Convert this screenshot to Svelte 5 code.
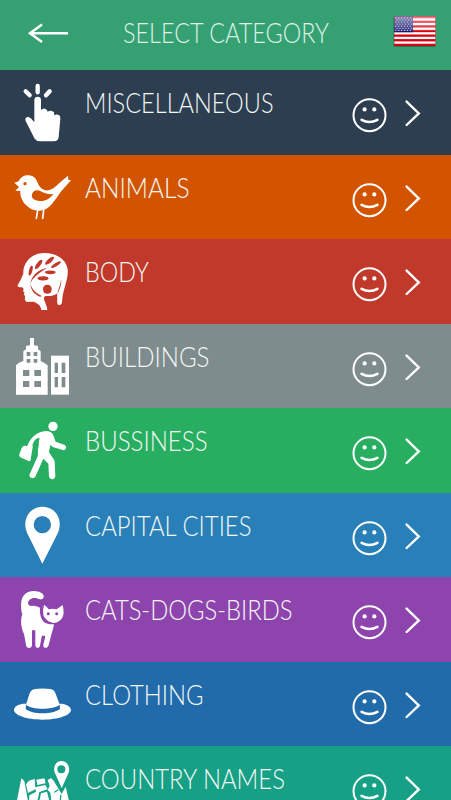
<script>
    /** @typedef {{name:string,icon:string,color:string,width:number}} Category */
    /** @type {Category[]} */
    const categories = [
        { name: 'MISCELLANEOUS', icon: 'hand', color: '#2c3e50', width: 188.5 },
        { name: 'ANIMALS', icon: 'bird', color: '#d35400', width: 104.5 },
        { name: 'BODY', icon: 'head', color: '#c0392b', width: 64 },
        { name: 'BUILDINGS', icon: 'buildings', color: '#7f8c8d', width: 124.5 },
        { name: 'BUSSINESS', icon: 'walker', color: '#27ae60', width: 122.5 },
        { name: 'CAPITAL CITIES', icon: 'pin', color: '#2980b9', width: 166.5 },
        { name: 'CATS-DOGS-BIRDS', icon: 'cat', color: '#8e44ad', width: 207.5 },
        { name: 'CLOTHING', icon: 'hat', color: '#226bab', width: 118.5 },
        { name: 'COUNTRY NAMES', icon: 'map', color: '#16a085', width: 200 }
    ];

    const stripes = [0, 1, 2, 3, 4, 5, 6];
    const starRows = [0, 1, 2, 3, 4, 5, 6];
    const starCols = [0, 1, 2, 3, 4, 5];
</script>

<div class="screen">
    <header>
        <button class="back" aria-label="Back">
            <svg width="42" height="24" viewBox="0 0 42 24">
                <path d="M15 3.5 L3 12.3 L15 21 M3 12.3 H41" />
            </svg>
        </button>
        <h1>
            <svg class="label" width="208" height="32">
                <text x="0" y="24" textLength="206" lengthAdjust="spacingAndGlyphs">SELECT CATEGORY</text>
            </svg>
        </h1>
        <svg class="flag" width="46" height="36" viewBox="0 0 46 36" role="img" aria-label="English (US)">
            <defs>
                <linearGradient id="gloss" x1="0" y1="0" x2="0" y2="1">
                    <stop offset="0" stop-color="#fff" stop-opacity="0.5" />
                    <stop offset="0.5" stop-color="#fff" stop-opacity="0.15" />
                    <stop offset="0.51" stop-color="#fff" stop-opacity="0" />
                </linearGradient>
            </defs>
            <rect x="1.5" y="3" width="42.5" height="29.8" rx="1" fill="#16633f" opacity="0.65" />
            <rect x="2" y="2" width="41.5" height="30" fill="#fff" />
            {#each stripes as n}
                <rect x="2" y={2 + n * 4.62} width="41.5" height="2.31" fill="#d8000f" />
            {/each}
            <rect x="2" y="2" width="19" height="16.2" fill="#17176f" />
            {#each starRows as r}
                {#each starCols as c}
                    <circle cx={3.8 + c * 2.9 + (r % 2) * 1.3} cy={3.8 + r * 2.1} r="0.62" fill="#c9cae5" />
                {/each}
            {/each}
            <rect x="2" y="2" width="41.5" height="30" fill="url(#gloss)" />
            <rect x="2.3" y="2.3" width="41" height="29.4" fill="none" stroke="#a31229" stroke-width="0.6" opacity="0.5" />
        </svg>
    </header>

    <main>
        {#each categories as category (category.name)}
            <div class="row" style="background-color: {category.color}">
                <svg class="icon" viewBox="0 0 255 255" style="color: {category.color}">
                    {#if category.icon === 'hand'}
                        <g class="ray">
                            <path d="M77 64 L89 76 M113 48 V67 M149 64 L138 76" />
                        </g>
                        <path d="M103 90 Q103 80 113 80 Q123 80 123 90 V120 Q132 111 141 120 L143 125 Q154 118 162 127 L163 136 Q170 131 178 136 Q181 139 181 146 L176 201 Q174 214 162 214 H120 Q110 214 104 206 L78 155 Q73 146 80 142 Q86 138 94 146 L103 157 Z" />
                    {:else if category.icon === 'bird'}
                        <path d="M43 83 L56 79 C63 64 75 60 87 61 C105 63 109 74 115 88 C119 98 131 108 145 106 C160 104 170 91 184 79 L204 62 L205 74 L213 76 L193 98 C180 111 173 125 162 139 C148 158 139 165 120 167 C102 168 88 161 78 150 C65 139 60 121 61 108 L46 107 L57 96 Z" />
                        <circle class="hole" cx="75" cy="86" r="5" />
                        <path class="hole" d="M96 118 C99 104 112 104 119 107 C134 114 145 119 160 117 C151 130 137 139 119 138 C103 137 93 130 96 118 Z" />
                        <path class="leg" d="M113 166 L109 190 M131 165 L128 190" />
                    {:else if category.icon === 'head'}
                        <path d="M70 104 C68 75 90 42 134 42 C172 42 200 64 203 92 C206 117 190 151 187 178 C186 190 187 199 177 198 C169 198 173 183 171 164 C160 171 151 171 138 171 C122 174 142 195 142 213 H124 C123 200 113 195 105 190 C96 186 80 192 77 186 C72 180 76 177 75 171 L71 166 L74 161 L69 157 C71 151 72 147 65 145 C58 144 52 146 53 139 Q61 126 70 104 Z" />
                        <g class="hole">
                            <ellipse cx="92" cy="95" rx="5" ry="15" transform="rotate(15 92 95)" />
                            <ellipse cx="116" cy="76" rx="6" ry="17" transform="rotate(37 116 76)" />
                            <ellipse cx="149" cy="65" rx="6" ry="17" transform="rotate(49 149 65)" />
                            <ellipse cx="168" cy="77" rx="5" ry="17" transform="rotate(58 168 77)" />
                            <ellipse cx="151" cy="100" rx="16" ry="5.5" />
                            <ellipse cx="129" cy="118" rx="16" ry="6.5" />
                            <path d="M142 137 C150 137 155 143 155 151 Q155 157 151 162 Q142 166 133 162 Q129 157 129 151 C129 143 134 137 142 137 Z" />
                            <path d="M91 134 C95 109 113 92 142 86 C123 98 98 113 91 134 Z" />
                            <path d="M91 134 C96 151 108 163 126 171 L120 173 C103 165 92 153 91 134 Z" />
                            <path d="M183 120 C187 137 177 151 172 168 C174 150 183 136 183 120 Z" />
                        </g>
                    {:else if category.icon === 'buildings'}
                        <path d="M90 42 H102 V64 L114 66 V76 L122 82 V111 L132 116 L143 124 V212 H48 V124 L57 116 L70 111 V82 L78 76 V66 L90 64 Z" />
                        <path d="M153 95 H207 V212 H153 Z" />
                        <path class="hole" d="M80 84 H91 V96 H80 Z M101 84 H112 V96 H101 Z M80 105 H91 V116 H80 Z M101 105 H112 V116 H101 Z M69 138 H88 V156 H69 Z M103 138 H123 V156 H103 Z M69 171 H88 V189 H69 Z M103 171 H123 V189 H103 Z M164 116 H174 V147 H164 Z M185 116 H196 V147 H185 Z M164 159 H174 V190 H164 Z M185 159 H196 V190 H185 Z" />
                    {:else if category.icon === 'walker'}
                        <circle cx="159" cy="55" r="14" />
                        <path d="M82 114 C88 96 98 85 111 77 C125 70 139 67 150 71 C158 75 162 83 164 94 L167 101 L193 110 C203 115 198 129 188 126 L158 117 L151 110 L147 133 L159 151 Q164 156 164 163 L166 204 C166 216 149 217 147 205 L145 167 L130 152 L107 204 C101 216 85 210 89 199 L113 145 C115 140 112 129 115 119 C118 107 115 99 119 90 C107 90 102 98 97 112 Q99 114 98 118 L92 155 Q91 161 85 159 L61 148 Q56 145 58 139 L65 120 Q67 114 73 113 Z" />
                    {:else if category.icon === 'pin'}
                        <path fill-rule="evenodd" d="M127 212 L81 119 C65 82 88 41 127 41 C168 41 190 81 174 119 Z M127 69 A26 26 0 1 0 127 121 A26 26 0 1 0 127 69 Z" />
                    {:else if category.icon === 'cat'}
                        <path d="M67 112 C62 98 63 79 64 73 C67 54 82 42 100 42 C120 42 134 51 131 61 C128 70 118 68 110 64 C96 60 85 68 84 79 Q84 86 92 87 Q108 85 120 92 C118 112 124 133 139 139 C147 143 154 142 162 142 C160 157 155 168 152 181 L146 204 C143 216 128 215 130 203 L136 178 Q128 172 125 179 L120 206 C117 216 106 214 106 204 V160 H96 V204 C96 216 79 216 78 204 L72 171 C62 151 61 128 67 112 Z" />
                        <path d="M132 83 Q140 88 146 97 Q158 93 170 97 L188 84 Q193 107 189 118 C184 130 173 138 162 138 C148 138 130 123 130 112 Q128 97 132 83 Z" />
                        <circle class="hole" cx="145" cy="110" r="4.5" />
                        <circle class="hole" cx="170" cy="110" r="4.5" />
                    {:else if category.icon === 'hat'}
                        <path d="M79 125 L88 96 Q93 82 105 81 Q127 78 151 81 Q162 82 167 95 L178 125 C193 124 214 132 213 145 C211 160 176 173 128 173 C79 173 44 160 42 145 C41 132 60 124 79 125 Z" />
                        <path class="hole" d="M78 128 C96 144 159 144 179 128 L180 141 C160 158 95 158 77 141 Z" />
                    {:else if category.icon === 'map'}
                        <path d="M51 163 L64 97 L73 105 L84 165 Z" />
                        <path d="M87 104 L104 99 L106 130 L84 141 L78 115 Z" />
                        <path d="M109 101 L133 97 L137 112 L112 117 Z" />
                        <path d="M103 124 L136 117 L143 130 L118 138 L112 165 H87 L88 148 L109 137 Z" />
                        <path d="M143 102 L153 96 L160 103 L185 144 L197 122 L207 165 H154 L151 140 L143 132 L149 119 Z" />
                        <path d="M123 142 L141 137 L148 165 H118 Z" />
                        <path class="seam" d="M164 138 L174 132 M182 148 L181 165" />
                        <path fill-rule="evenodd" stroke="currentColor" stroke-width="4" d="M185 131 L164 84 C155 65 165 43 184 43 C204 43 216 65 206 85 Z M184 60 A10 10 0 1 0 184 80 A10 10 0 1 0 184 60 Z" />
                    {/if}
                </svg>
                <div class="name">
                    <svg class="label" width="230" height="32">
                        <text x="0" y="24" textLength={category.width} lengthAdjust="spacingAndGlyphs">{category.name}</text>
                    </svg>
                </div>
                <svg class="smile" width="36" height="36" viewBox="0 0 36 36">
                    <circle cx="18.5" cy="18.2" r="16" />
                    <path d="M10.6 22.8 Q18.5 27.2 26.4 22.8" />
                    <circle class="eye" cx="13.6" cy="12.4" r="2.1" />
                    <circle class="eye" cx="23.3" cy="12.4" r="2.1" />
                </svg>
                <svg class="chevron" width="18" height="30" viewBox="0 0 18 30">
                    <path d="M2.6 3.6 L14.8 15.4 L2.6 27" />
                </svg>
            </div>
        {/each}
    </main>
</div>

<style>
    :global(body) {
        margin: 0;
        overflow: hidden;
    }

    .screen {
        width: 100%;
        height: 800px;
        overflow: hidden;
        background-color: #35a173;
        font-family: Lato, "Open Sans", sans-serif;
    }

    svg {
        display: block;
        flex: none;
    }

    header {
        display: flex;
        align-items: flex-start;
        height: 70.4px;
        box-sizing: border-box;
        padding: 14px 13px 0 27px;
    }

    .back {
        margin: 7px 0 0;
        padding: 0;
        border: none;
        background: none;
        cursor: pointer;
    }

    .back path {
        fill: none;
        stroke: #fff;
        stroke-width: 2.5;
    }

    h1 {
        margin: 4.7px 0 0 54px;
        font-size: 26px;
        font-weight: 300;
    }

    .label {
        overflow: visible;
    }

    .label text {
        fill: #f4f8f6;
        font-size: 26.5px;
        font-weight: 300;
    }

    h1 .label text {
        fill: #dff1e9;
    }

    .flag {
        margin-left: auto;
        margin-right: 0;
    }

    .row {
        display: flex;
        align-items: flex-start;
        height: 84.5px;
        cursor: pointer;
    }

    .icon {
        width: 85px;
        height: 85px;
        fill: #fff;
    }

    .hole {
        fill: currentColor;
    }

    .ray,
    .leg,
    .seam {
        fill: none;
        stroke: #fff;
        stroke-width: 13;
        stroke-linecap: round;
    }

    .leg {
        stroke-width: 5;
    }

    .seam {
        stroke: currentColor;
        stroke-width: 4;
    }

    .name {
        width: 266px;
        padding-top: 19px;
    }

    .smile {
        margin-top: 27px;
    }

    .smile circle,
    .smile path {
        fill: none;
        stroke: #fff;
        stroke-width: 2;
        stroke-linecap: round;
    }

    .smile path {
        stroke-width: 2.6;
    }

    .smile .eye {
        fill: #fff;
        stroke: none;
    }

    .chevron {
        margin: 28px 0 0 17px;
    }

    .chevron path {
        fill: none;
        stroke: #fff;
        stroke-width: 2.4;
        stroke-linecap: round;
    }
</style>
